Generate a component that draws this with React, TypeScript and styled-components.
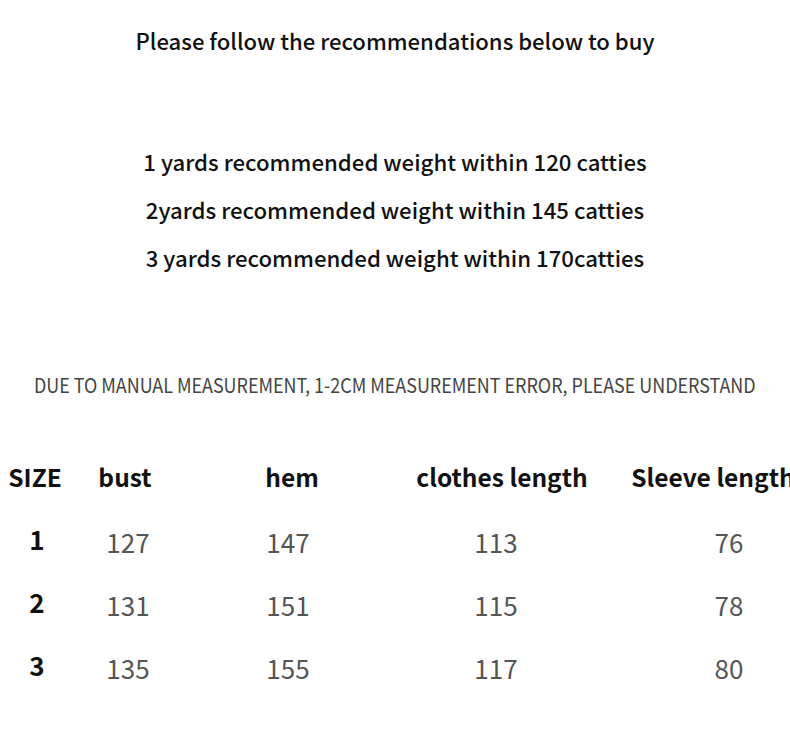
import React from 'react';
import styled, { createGlobalStyle } from 'styled-components';

const GlobalStyle = createGlobalStyle`
  html, body {
    margin: 0;
    padding: 0;
    background: #fff;
    overflow: hidden;
  }
  body {
    font-family: 'Noto Sans CJK SC', 'Noto Sans', sans-serif;
    color: #111;
  }
`;

const Page = styled.div`
  width: 790px;
  height: 745px;
  overflow: hidden;
  display: flex;
  flex-direction: column;
`;

const Title = styled.div`
  font-size: 22.1px;
  font-weight: 500;
  line-height: 30px;
  text-align: center;
  margin-top: 25px;
`;

const Recommendations = styled.div`
  display: flex;
  flex-direction: column;
  gap: 18px;
  margin-top: 91px;
  align-items: center;
`;

const RecLine = styled.div`
  font-size: 22.2px;
  font-weight: 500;
  line-height: 30px;
`;

const Notice = styled.div`
  margin-top: 100px;
  display: flex;
  justify-content: center;
  white-space: nowrap;
`;

const NoticeText = styled.span`
  display: inline-block;
  font-size: 20px;
  line-height: 26px;
  color: #444;
  transform: scaleX(0.896);
`;

const Table = styled.div`
  margin-top: 48px;
  width: 860px;
  display: flex;
  flex-direction: column;
`;

const Row = styled.div<{ $height: number }>`
  display: grid;
  grid-template-columns: 74px 108px 212px 204px 262px;
  height: ${(p) => p.$height}px;
  align-items: center;
`;

const HeadCell = styled.div<{ $nudge?: number }>`
  font-size: 24.5px;
  font-weight: 700;
  text-align: center;
  white-space: nowrap;
  margin-left: ${(p) => (p.$nudge || 0) * 2}px;
`;

const SizeCell = styled.div`
  font-size: 26px;
  font-weight: 700;
  text-align: center;
`;

const ValueCell = styled.div`
  font-size: 26px;
  color: #555;
  text-align: center;
  padding-top: 5px;
`;

const headers = [
  { label: 'SIZE', nudge: -2 },
  { label: 'bust', nudge: -3 },
  { label: 'hem', nudge: 4 },
  { label: 'clothes length', nudge: 6 },
  { label: 'Sleeve length', nudge: -16 },
];

const rows = [
  ['1', '127', '147', '113', '76'],
  ['2', '131', '151', '115', '78'],
  ['3', '135', '155', '117', '80'],
];

export default function App() {
  return (
    <Page>
      <GlobalStyle />
      <Title>Please follow the recommendations below to buy</Title>
      <Recommendations>
        <RecLine>1 yards recommended weight within 120 catties</RecLine>
        <RecLine>2yards recommended weight within 145 catties</RecLine>
        <RecLine>3 yards recommended weight within 170catties</RecLine>
      </Recommendations>
      <Notice>
        <NoticeText>DUE TO MANUAL MEASUREMENT, 1-2CM MEASUREMENT ERROR, PLEASE UNDERSTAND</NoticeText>
      </Notice>
      <Table>
        <Row $height={61}>
          {headers.map((h) => (
            <HeadCell key={h.label} $nudge={h.nudge}>
              {h.label}
            </HeadCell>
          ))}
        </Row>
        {rows.map((r) => (
          <Row key={r[0]} $height={63}>
            <SizeCell>{r[0]}</SizeCell>
            {r.slice(1).map((v, i) => (
              <ValueCell key={i}>{v}</ValueCell>
            ))}
          </Row>
        ))}
      </Table>
    </Page>
  );
}
